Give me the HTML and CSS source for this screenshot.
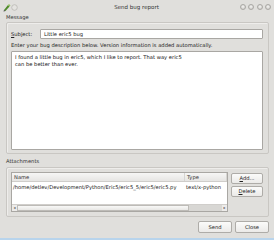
FILE: index.html
```html
<!DOCTYPE html>
<html>
<head>
<meta charset="utf-8">
<link rel="stylesheet" href="styles.css">
</head>
<body>
<div class="window">
  <div class="titlebar">
    <div class="tb-left">
      <svg width="16" height="10" viewBox="0 0 16 10">
        <path d="M2 8 L6 3 L7.5 4.5 L3.5 9 Z" fill="#4f8a2a"/>
        <path d="M6 3 L7 2 L8.5 3.5 L7.5 4.5 Z" fill="#8fc25a"/>
        <path d="M2 8 L3.5 9 L1.5 9.5 Z" fill="#333"/>
        <circle cx="12.5" cy="5.5" r="2.8" fill="#e4e3e0" stroke="#b9b7b3" stroke-width="0.8"/>
      </svg>
    </div>
    <div class="title">Send bug report</div>
    <div class="tb-right">
      <span class="tbtn"></span><span class="tbtn"></span><span class="tbtn"></span><span class="tbtn"></span>
    </div>
  </div>
  <div class="content">
    <div class="glabel">Message</div>
    <div class="group msg">
      <div class="subject-row">
        <span class="lbl"><u>S</u>ubject:</span>
        <div class="input">Little eric5 bug</div>
      </div>
      <div class="hint">Enter your bug description below. Version information is added automatically.</div>
      <div class="textarea">I found a little bug in eric5, which I like to report. That way eric5<br>can be better than ever.</div>
    </div>
    <div class="glabel att-label">Attachments</div>
    <div class="group att">
      <div class="table">
        <div class="thead">
          <div class="th c-name">Name</div>
          <div class="th c-type">Type</div>
        </div>
        <div class="trow">
          <div class="td c-name">/home/detlev/Development/Python/Eric5/eric5_5/eric5/eric5.py</div>
          <div class="td c-type">text/x-python</div>
        </div>
        <div class="tspace"></div>
        <div class="hscroll">
          <span class="arrow">◂</span>
          <span class="thumb"></span>
          <span class="track"></span>
          <span class="arrow">▸</span>
        </div>
      </div>
      <div class="side">
        <div class="btn"><u>A</u>dd...</div>
        <div class="btn"><u>D</u>elete</div>
      </div>
    </div>
    <div class="bottom">
      <div class="btn wide">Send</div>
      <div class="btn wide">Close</div>
    </div>
  </div>
  <div class="bluebar"></div>
</div>
</body>
</html>
```
FILE: styles.css
```css
html, body {
  margin: 0;
  padding: 0;
}
body {
  width: 274px;
  height: 240px;
  overflow: hidden;
  background: #e0dfdc;
  font-family: "DejaVu Sans", sans-serif;
  font-size: 5.2px;
  color: #222;
}
.window {
  width: 274px;
  height: 240px;
  display: flex;
  flex-direction: column;
  background: #e0dfdc;
}
.titlebar {
  height: 13px;
  display: flex;
  align-items: center;
  justify-content: space-between;
  padding: 0 3px 0 2px;
  flex: none;
}
.tb-left {
  width: 40px;
  display: flex;
  align-items: center;
}
.tb-left svg { display: block; }
.title {
  font-size: 5.5px;
  color: #333;
}
.tb-right {
  width: 40px;
  display: flex;
  justify-content: flex-end;
  gap: 2.5px;
}
.tbtn {
  width: 6px;
  height: 6px;
  border-radius: 50%;
  background: radial-gradient(circle at 50% 40%, #f4f4f2 0, #cfcdca 80%);
  border: 0.6px solid #aaa8a4;
  box-sizing: border-box;
}
.content {
  flex: 1;
  display: flex;
  flex-direction: column;
  padding: 0 5px 0 6px;
}
.glabel {
  height: 9px;
  line-height: 8px;
  color: #333;
}
.group {
  border: 1px solid #c9c7c3;
  border-radius: 2px;
  box-shadow: inset 1px 1px 0 #eeedeb;
  padding: 6px 5px 3px 4px;
}
.msg {
  height: 132px;
  box-sizing: border-box;
  display: flex;
  flex-direction: column;
}
.subject-row {
  display: flex;
  align-items: center;
  height: 10px;
  gap: 4px;
}
.lbl {
  width: 25px;
  color: #222;
}
.input {
  flex: 1;
  height: 10px;
  box-sizing: border-box;
  background: #fff;
  border: 1px solid #a9a7a3;
  border-radius: 1px;
  line-height: 8px;
  padding-left: 3px;
}
.hint {
  height: 11px;
  line-height: 11px;
  margin-top: 1px;
}
.textarea {
  flex: 1;
  background: #fff;
  border: 1px solid #a9a7a3;
  border-radius: 1px;
  padding: 2px 3px;
  line-height: 7px;
  color: #111;
}
.att-label {
  margin-top: 3px;
  height: 10px;
  line-height: 9px;
}
.att {
  display: flex;
  gap: 3px;
  padding: 4px 5px 4px 4px;
  height: 50px;
  box-sizing: border-box;
}
.table {
  width: 217px;
  background: #fff;
  border: 1px solid #a9a7a3;
  display: flex;
  flex-direction: column;
  box-sizing: border-box;
}
.thead {
  display: flex;
  height: 8px;
  background: linear-gradient(#f6f6f5, #e6e5e3);
  border-bottom: 1px solid #cfcdca;
  line-height: 8px;
}
.th {
  padding-left: 2px;
  color: #333;
}
.c-name {
  width: 172px;
  box-sizing: border-box;
  white-space: nowrap;
  overflow: hidden;
}
.c-type {
  flex: 1;
  padding-left: 2px;
  white-space: nowrap;
}
.thead .c-type {
  border-left: 1px solid #d6d5d2;
  border-right: 1px solid #d6d5d2;
}
.trow {
  display: flex;
  line-height: 8px;
  height: 8px;
  margin-top: 1px;
}
.td.c-name {
  padding-left: 1px;
}
.tspace { flex: 1; }
.hscroll {
  height: 6px;
  display: flex;
  align-items: stretch;
  border-top: 1px solid #d0cecb;
  background: #d8d7d4;
}
.arrow {
  width: 5px;
  font-size: 4px;
  line-height: 6px;
  text-align: center;
  color: #555;
  background: #ecebe9;
}
.thumb {
  width: 172px;
  background: linear-gradient(#f8f8f7, #e8e7e5);
  border: 0.5px solid #bdbbb7;
  box-sizing: border-box;
}
.track { flex: 1; }
.side {
  flex: 1;
  display: flex;
  flex-direction: column;
  gap: 2px;
  padding-top: 1px;
}
.btn {
  height: 11px;
  box-sizing: border-box;
  border: 1px solid #aeaca8;
  border-radius: 2px;
  background: linear-gradient(#fbfbfa, #ebeae8);
  text-align: center;
  line-height: 9px;
  color: #222;
}
.bottom {
  display: flex;
  justify-content: flex-end;
  gap: 3px;
  margin-top: 4px;
}
.btn.wide { width: 34px; height: 12px; line-height: 10px; }
.bluebar {
  height: 2px;
  background: #b8d4ec;
  margin-top: auto;
}
```
